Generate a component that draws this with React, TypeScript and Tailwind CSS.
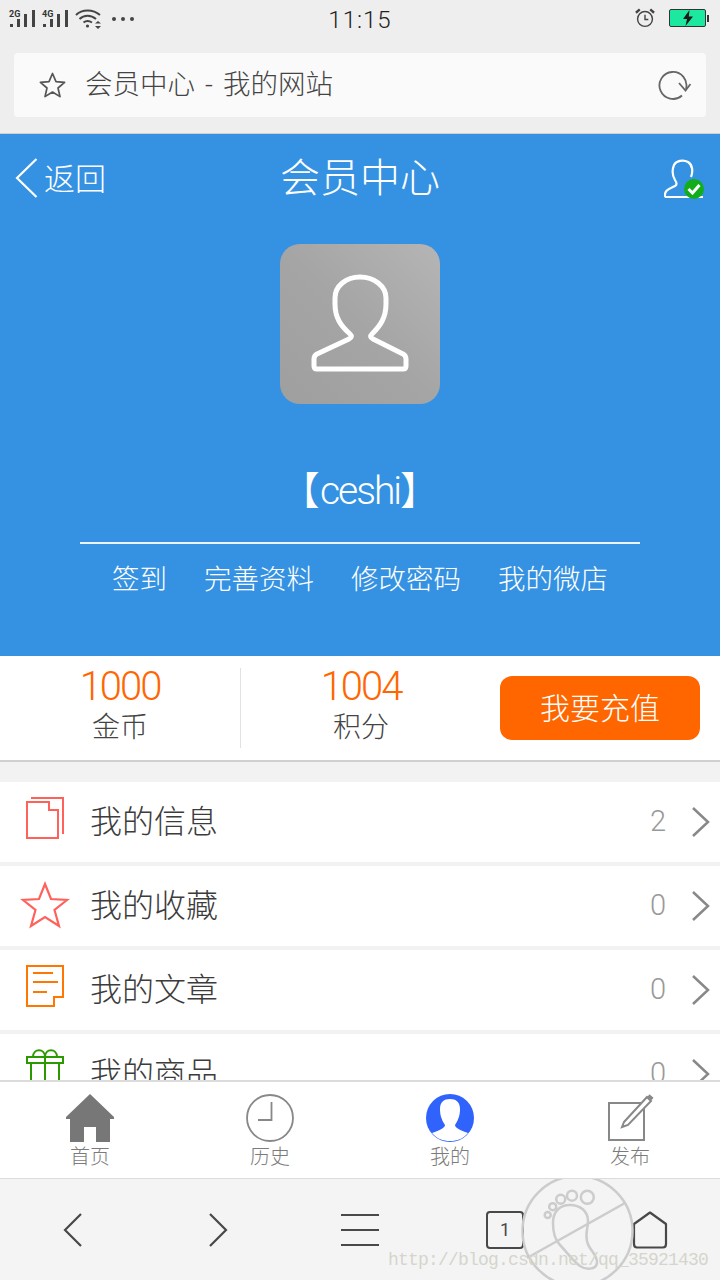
import React from 'react';

const SignalIcon = ({ label }: { label: string }) => (
  <div className="relative w-[27px] h-[20px]">
    <svg width="27" height="20" viewBox="0 0 27 20" className="absolute left-0 top-0">
      <rect x="1" y="15" width="3" height="3" fill="#444" />
      <rect x="8" y="10" width="3" height="8" fill="#444" />
      <rect x="15" y="5" width="3" height="13" fill="#444" />
      <rect x="23" y="1" width="3" height="17" fill="#444" />
    </svg>
    <span className="absolute left-0 top-0 text-[9px] leading-[10px] font-bold text-[#333] font-['Roboto',sans-serif]">{label}</span>
  </div>
);

const StatusBar = () => (
  <div className="relative h-[40px] flex items-start justify-between pl-[9px] pr-[11px] pt-[8px]">
    <div className="flex items-center gap-[6px]">
      <SignalIcon label="2G" />
      <SignalIcon label="4G" />
      <svg width="26" height="22" viewBox="0 0 26 22" fill="none" stroke="#444" strokeWidth="2">
        <path d="M1 7 C7 1 18 1 25 7" />
        <path d="M4.5 11 C9 6.5 16 6.5 21 11" />
        <path d="M8.5 14.5 C11 12.5 14 12.5 17 14.5" />
        <circle cx="12.5" cy="18" r="1.6" fill="#444" stroke="none" />
        <path d="M20 15.5 h6 l-3 -2.5 z M20 18 h6 l-3 3 z" fill="#444" stroke="none" />
      </svg>
      <div className="flex gap-[5px] ml-[5px]">
        <div className="w-[4px] h-[4px] rounded-full bg-[#444]" />
        <div className="w-[4px] h-[4px] rounded-full bg-[#444]" />
        <div className="w-[4px] h-[4px] rounded-full bg-[#444]" />
      </div>
    </div>
    <span className="absolute left-0 right-0 top-[5px] text-center text-[24px] leading-[30px] text-[#222] tracking-[1px] font-light font-['Roboto',sans-serif]">11:15</span>
    <div className="flex items-center gap-[14px]">
      <svg width="20" height="20" viewBox="0 0 21 21" fill="none" stroke="#444" strokeWidth="1.5">
        <circle cx="10.5" cy="11.5" r="7.8" />
        <path d="M10.5 7 v5 h3.5" />
        <path d="M1 5 L5 1.5 M16 1.5 L20 5" strokeWidth="2.5" />
      </svg>
      <div className="flex items-center">
        <div className="w-[37px] h-[18px] rounded-[2px] border border-[#333] bg-[#1ce8a0] flex items-center justify-center">
          <svg width="12" height="16" viewBox="0 0 12 16">
            <path d="M7.5 0 L1 9 H5 L3.5 16 L11 6.5 H6.8 Z" fill="#1a1a1a" />
          </svg>
        </div>
        <div className="w-[2px] h-[7px] bg-[#333] ml-[1px]" />
      </div>
    </div>
  </div>
);

const AddressBar = () => (
  <div className="px-[14px] pt-[13px] pb-[16px]">
    <div className="h-[64px] bg-[#fafafa] rounded-[4px] flex items-center pl-[25px] pr-[15px]">
      <svg width="27" height="26" viewBox="0 0 27 26" fill="none" stroke="#555" strokeWidth="1.7" strokeLinejoin="round">
        <path d="M13.5 1.5 L17 9.7 L25.6 10.4 L19 16 L21 24.6 L13.5 20 L6 24.6 L8 16 L1.4 10.4 L10 9.7 Z" />
      </svg>
      <span className="ml-[19px] text-[27.5px] leading-[32px] text-[#444] font-['Roboto','Noto_Sans_CJK_SC',sans-serif] font-light whitespace-nowrap">
        会员中心<span className="mx-[10px]">-</span>我的网站
      </span>
      <div className="flex-1" />
      <svg width="34" height="30" viewBox="0 0 34 30" fill="none" stroke="#666" strokeWidth="1.8">
        <path d="M25 25.5 A13.5 13.5 0 1 1 29 19" />
        <path d="M22 13 L28.5 20.5 L33.5 14" />
      </svg>
    </div>
  </div>
);

const BlueHeader = () => (
  <div className="h-[523px] bg-[#3592e2] border-t border-t-[#d0d0d0] text-white flex flex-col items-center font-['Roboto','Noto_Sans_CJK_SC',sans-serif] font-light">
    <div className="relative w-full h-[90px]">
      <svg width="24" height="42" viewBox="0 0 24 42" fill="none" stroke="#fff" strokeWidth="2.2" className="absolute left-[15px] top-[23px]">
        <path d="M21.5 2 L2 21 L21.5 40" />
      </svg>
      <span className="absolute left-[44px] top-[27px] text-[31px] leading-[38px]">返回</span>
      <span className="absolute left-0 right-0 top-[21px] text-center text-[40px] leading-[48px]">会员中心</span>
      <div className="absolute left-[664px] top-[25px] w-[40px] h-[40px]">
        <svg width="40" height="40" viewBox="0 0 40 40" fill="none" stroke="#fff" strokeWidth="2.2">
          <path d="M1 38 C0 31 5 30 11 27 C13 26 13 24 11 21 C8 16 8 11 10 6 C12 2 19 0 24 3 C29 6 29 13 27 18 M1 38 H39" />
        </svg>
        <div className="absolute right-0 bottom-0 w-[20px] h-[20px] rounded-full bg-[#12ad1a] flex items-center justify-center">
          <svg width="14" height="12" viewBox="0 0 14 12" fill="none" stroke="#fff" strokeWidth="3">
            <path d="M1.5 6 L5.5 10 L12.5 2" />
          </svg>
        </div>
      </div>
    </div>
    <div className="mt-[20px] w-[160px] h-[160px] rounded-[20px] bg-gradient-to-tr from-[#9f9f9f] via-[#a5a5a5] to-[#b5b5b5] flex items-center justify-center">
      <svg width="100" height="100" viewBox="0 0 100 100" fill="none" stroke="#fff" strokeWidth="5" strokeLinejoin="round" className="blur-[0.5px]">
        <path d="M40 60 C31 52 25 44 25 30 V24 C25 12 36 3 50 3 C64 3 76 12 76 24 V30 C76 44 70 52 62 60 C60 62 60 63 63 65 L93 80 C95 81 96 83 96 85 V92 C96 94 95 95 93 95 H7 C5 95 4 94 4 92 V85 C4 83 5 81 7 80 L39 65 C42 63 42 62 40 60 Z" />
      </svg>
    </div>
    <div className="mt-[60px] text-[39px] leading-[54px] font-light whitespace-nowrap">
      【<span className="tracking-[-2px]">ceshi</span>】
    </div>
    <div className="mt-[24px] w-[560px] h-[2px] bg-white/90" />
    <div className="mt-[18px] flex gap-[37px] text-[27.5px] leading-[36px]">
      <span>签到</span>
      <span>完善资料</span>
      <span>修改密码</span>
      <span>我的微店</span>
    </div>
  </div>
);

const Stat = ({ value, label }: { value: string; label: string }) => (
  <div className="w-[240px] h-[104px] pt-[11px] flex flex-col items-center">
    <span className="text-[40px] leading-[40px] tracking-[-2px] text-[#ff6600] font-light">{value}</span>
    <span className="text-[28px] leading-[42px] text-[#444] font-light">{label}</span>
  </div>
);

const Stats = () => (
  <div className="h-[106px] bg-white border-b-2 border-b-[#d0d0d0] flex items-center font-['Roboto','Noto_Sans_CJK_SC',sans-serif]">
    <Stat value="1000" label="金币" />
    <div className="w-[1px] h-[80px] bg-[#e2e2e2]" />
    <Stat value="1004" label="积分" />
    <div className="ml-[19px] w-[200px] h-[64px] rounded-[12px] bg-[#ff6600] text-white text-[30px] font-light flex items-center justify-center">我要充值</div>
  </div>
);

const icons: Record<string, React.ReactNode> = {
  info: (
    <svg width="40" height="44" viewBox="0 4 40 44" fill="none" stroke="#ff625b" strokeWidth="2" className="overflow-visible">
      <path d="M6 2 H38 V38" />
      <path d="M2 6 H24 V14 H33 V42 H2 Z" />
    </svg>
  ),
  star: (
    <svg width="50" height="46" viewBox="0 1 50 46" fill="none" stroke="#ff625b" strokeWidth="2.2" className="overflow-visible">
      <path d="M25 2 L31 17 L47 18 L34.5 28 L39 44 L25 35 L11 44 L15.5 28 L3 18 L19 17 Z" />
    </svg>
  ),
  article: (
    <svg width="40" height="44" viewBox="0 4 40 44" fill="none" stroke="#ff7700" strokeWidth="2" className="overflow-visible">
      <path d="M2 2 H38 V33 H29 V42 H2 Z" />
      <path d="M8 9 H28 M8 18 H33 M8 28 H22" />
    </svg>
  ),
  gift: (
    <svg width="40" height="44" viewBox="0 4 40 44" fill="none" stroke="#2d9900" strokeWidth="2" className="overflow-visible">
      <path d="M2 9 H38 V15 H2 Z" />
      <path d="M6 15 V48 M34 15 V48 M20 9 V48" />
      <path d="M8 9 C8 0 20 0 20 9 C20 0 32 0 32 9" />
    </svg>
  ),
};

const Row = ({ icon, title, count }: { icon: string; title: string; count: string }) => (
  <div className="h-[80px] shrink-0 bg-white flex items-center font-['Roboto','Noto_Sans_CJK_SC',sans-serif]">
    <div className="w-[90px] flex items-center justify-center pr-[1px]">{icons[icon]}</div>
    <span className="text-[32px] leading-[40px] text-[#3c3c3c] font-light">{title}</span>
    <div className="flex-1" />
    <span className="text-[29px] text-[#999] font-light">{count}</span>
    <svg width="20" height="32" viewBox="0 0 20 32" fill="none" stroke="#888" strokeWidth="2.5" className="ml-[25px] mr-[9px]">
      <path d="M2 2 L17 16 L2 30" />
    </svg>
  </div>
);

const TabItem = ({ icon, label }: { icon: React.ReactNode; label: string }) => (
  <div className="flex-1 flex flex-col items-center pt-[12px]">
    <div className="h-[48px] flex items-center justify-center">{icon}</div>
    <span className="mt-[2px] text-[20px] leading-[26px] text-[#7b7b7b] font-['Roboto','Noto_Sans_CJK_SC',sans-serif] font-light">{label}</span>
  </div>
);

const TabBar = () => (
  <div className="h-[99px] shrink-0 bg-white border-t-2 border-b border-t-[#dcdcdc] border-b-[#dcdcdc] flex">
    <TabItem
      label="首页"
      icon={
        <svg width="48" height="48" viewBox="0 0 48 48" fill="#777">
          <path d="M24 0 L48 23 V25 H44 V48 H30 V33 H18 V48 H4 V25 H0 V23 Z" />
        </svg>
      }
    />
    <TabItem
      label="历史"
      icon={
        <svg width="48" height="48" viewBox="0 0 48 48" fill="none" stroke="#888" strokeWidth="1.8">
          <circle cx="24" cy="24" r="23" />
          <path d="M25.5 8 V26 H12" />
        </svg>
      }
    />
    <TabItem
      label="我的"
      icon={
        <svg width="48" height="48" viewBox="0 0 48 48">
          <circle cx="24" cy="24" r="24" fill="#2f63fb" />
          <path d="M19 31 C15 25 14 20 14 15 C14 8 18 5 24 5 C30 5 34 8 34 15 C34 20 33 25 29 31 C29 34 34 36 42 39 C37 45 31 47 24 47 C17 47 11 45 6 39 C14 36 19 34 19 31 Z" fill="#fff" />
        </svg>
      }
    />
    <TabItem
      label="发布"
      icon={
        <svg width="48" height="48" viewBox="0 0 48 48" fill="none" stroke="#888" strokeWidth="2">
          <path d="M36 9 H3 V46 H38 V14" />
          <path d="M18 28 L41 3 L45 7 L22 31 L16 33 Z" />
          <path d="M42.5 1.5 L46.5 5" strokeWidth="3" />
        </svg>
      }
    />
  </div>
);

const BrowserBar = () => (
  <div className="relative flex-1 bg-[#f4f4f4] overflow-hidden">
    <div className="h-full flex items-center">
      <div className="w-[145px] flex justify-center">
        <svg width="20" height="36" viewBox="0 0 20 36" fill="none" stroke="#484848" strokeWidth="2.2">
          <path d="M18 2 L2 18 L18 34" />
        </svg>
      </div>
      <div className="w-[145px] flex justify-center">
        <svg width="20" height="36" viewBox="0 0 20 36" fill="none" stroke="#484848" strokeWidth="2.2">
          <path d="M2 2 L18 18 L2 34" />
        </svg>
      </div>
      <div className="w-[140px] flex flex-col items-center gap-[13px]">
        <div className="w-[38px] h-[2px] bg-[#484848]" />
        <div className="w-[38px] h-[2px] bg-[#484848]" />
        <div className="w-[38px] h-[2px] bg-[#484848]" />
      </div>
      <div className="w-[150px] flex justify-center">
        <div className="w-[38px] h-[38px] rounded-[4px] border-2 border-[#484848] flex items-center justify-center text-[18px] text-[#484848] font-['Roboto',sans-serif]">1</div>
      </div>
      <div className="w-[140px] flex justify-center">
        <svg width="36" height="38" viewBox="0 0 36 38" fill="none" stroke="#484848" strokeWidth="2.2" strokeLinejoin="round">
          <path d="M18 1.5 L34 13 V33 C34 35.5 33 36.5 31 36.5 H5 C3 36.5 2 35.5 2 33 V13 Z" />
        </svg>
      </div>
    </div>
    {/* csdn watermark over the toolbar */}
    <svg width="124" height="124" viewBox="0 0 124 124" fill="none" stroke="#cccccc" strokeWidth="2.5" className="absolute left-[516px] top-[-12px]">
      <circle cx="61.5" cy="64" r="55" />
      <path d="M11 91 L109 36" />
      <path d="M37 56 C37 44 44 38 54 38 C64 38 72 44 72 54 C72 62 69 66 71 74 C72 82 82 88 81 96 C80 103 70 103 64 99 C56 93 50 84 44 78 C40 74 37 66 37 56 Z" />
      <circle cx="31.7" cy="48" r="3" />
      <circle cx="36.7" cy="39.7" r="3.5" />
      <circle cx="44.7" cy="32.3" r="4.5" />
      <circle cx="56" cy="28.7" r="5" />
      <circle cx="71.3" cy="30.3" r="6.5" />
    </svg>
    <span className="absolute left-[388px] top-[69px] text-[18px] leading-[24px] tracking-[-0.8px] text-[#d5d5cd] font-['Liberation_Mono',monospace] whitespace-nowrap">http://blog.csdn.net/qq_35921430</span>
  </div>
);

export default function App() {
  return (
    <div className="w-[720px] h-[1280px] overflow-hidden bg-[#eeeeee] flex flex-col">
      <StatusBar />
      <AddressBar />
      <BlueHeader />
      <Stats />
      <div className="h-[318px] shrink-0 overflow-hidden bg-[#f2f2f2] pt-[20px] flex flex-col gap-[4px]">
        <Row icon="info" title="我的信息" count="2" />
        <Row icon="star" title="我的收藏" count="0" />
        <Row icon="article" title="我的文章" count="0" />
        <Row icon="gift" title="我的商品" count="0" />
      </div>
      <TabBar />
      <BrowserBar />
    </div>
  );
}
